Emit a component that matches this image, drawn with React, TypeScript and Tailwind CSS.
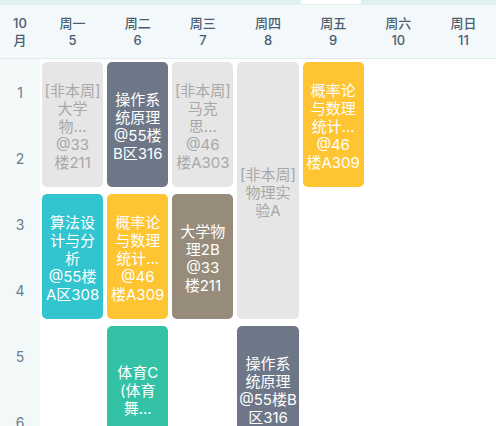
import React from "react";

type Course = {
  col: string; // grid column class
  row: string; // grid row class
  color: string;
  text: string;
  lines: string[];
};

const days = [
  { name: "周一", date: "5" },
  { name: "周二", date: "6" },
  { name: "周三", date: "7" },
  { name: "周四", date: "8" },
  { name: "周五", date: "9" },
  { name: "周六", date: "10" },
  { name: "周日", date: "11" },
];

const grayCard = "bg-[#e6e6e6]";
const grayText = "text-[#a8a8a8]";

const courses: Course[] = [
  { col: "col-start-1", row: "row-start-1 row-span-2", color: grayCard, text: grayText, lines: ["[非本周]", "大学", "物...", "@33", "楼211"] },
  { col: "col-start-2", row: "row-start-1 row-span-2", color: "bg-[#6e7788]", text: "text-white", lines: ["操作系", "统原理", "@55楼", "B区316"] },
  { col: "col-start-3", row: "row-start-1 row-span-2", color: grayCard, text: grayText, lines: ["[非本周]", "马克", "思...", "@46", "楼A303"] },
  { col: "col-start-4", row: "row-start-1 row-span-4", color: grayCard, text: grayText, lines: ["[非本周]", "物理实", "验A"] },
  { col: "col-start-5", row: "row-start-1 row-span-2", color: "bg-[#fec432]", text: "text-white", lines: ["概率论", "与数理", "统计...", "@46", "楼A309"] },
  { col: "col-start-1", row: "row-start-3 row-span-2", color: "bg-[#32c5cf]", text: "text-white", lines: ["算法设", "计与分", "析", "@55楼", "A区308"] },
  { col: "col-start-2", row: "row-start-3 row-span-2", color: "bg-[#fec432]", text: "text-white", lines: ["概率论", "与数理", "统计...", "@46", "楼A309"] },
  { col: "col-start-3", row: "row-start-3 row-span-2", color: "bg-[#978c7c]", text: "text-white", lines: ["大学物", "理2B", "@33", "楼211"] },
  { col: "col-start-2", row: "row-start-5 row-span-2", color: "bg-[#34c2a7]", text: "text-white", lines: ["体育C", "(体育", "舞..."] },
  { col: "col-start-4", row: "row-start-5 row-span-2", color: "bg-[#6e7788]", text: "text-white", lines: ["操作系", "统原理", "@55楼B", "区316"] },
];

export default function App() {
  return (
    <div className="w-[496px] h-[426px] overflow-hidden bg-white font-['Inter','Noto_Sans_CJK_SC',sans-serif]">
      {/* top strip */}
      <div className="flex h-[5px] bg-[#ddf1f1] border-b border-[#e6eeef]">
        <div className="w-[301px]" />
        <div className="w-[60px] bg-white" />
      </div>

      {/* week header */}
      <div className="grid grid-cols-[40px_repeat(7,1fr)] h-[54px] bg-[#f3f9fa] border-b border-[#e2e9eb] text-[13px] leading-[17px] font-medium text-[#4b5d70]">
        <div className="flex flex-col items-center justify-center">
          <span>10</span>
          <span>月</span>
        </div>
        {days.map((d) => (
          <div key={d.name} className="flex flex-col items-center justify-center">
            <span>{d.name}</span>
            <span>{d.date}</span>
          </div>
        ))}
      </div>

      {/* body */}
      <div className="flex">
        <div className="w-[40px] shrink-0 bg-[#f3f8f9] flex flex-col">
          {[1, 2, 3, 4, 5, 6].map((n) => (
            <div key={n} className="h-[66px] shrink-0 flex items-center justify-center text-[14px] text-[#6b7d8f]">
              {n}
            </div>
          ))}
        </div>
        <div className="flex-1 grid grid-cols-7 grid-rows-[repeat(6,66px)]">
          {courses.map((c, i) => (
            <div
              key={i}
              className={`${c.col} ${c.row} mx-[2px] mt-[3px] mb-[4px] pt-[4px] rounded-[5px] flex flex-col items-center justify-center text-center text-[15px] leading-[18px] ${c.color} ${c.text}`}
            >
              {c.lines.map((l, j) => (
                <span key={j}>{l}</span>
              ))}
            </div>
          ))}
        </div>
      </div>
    </div>
  );
}
